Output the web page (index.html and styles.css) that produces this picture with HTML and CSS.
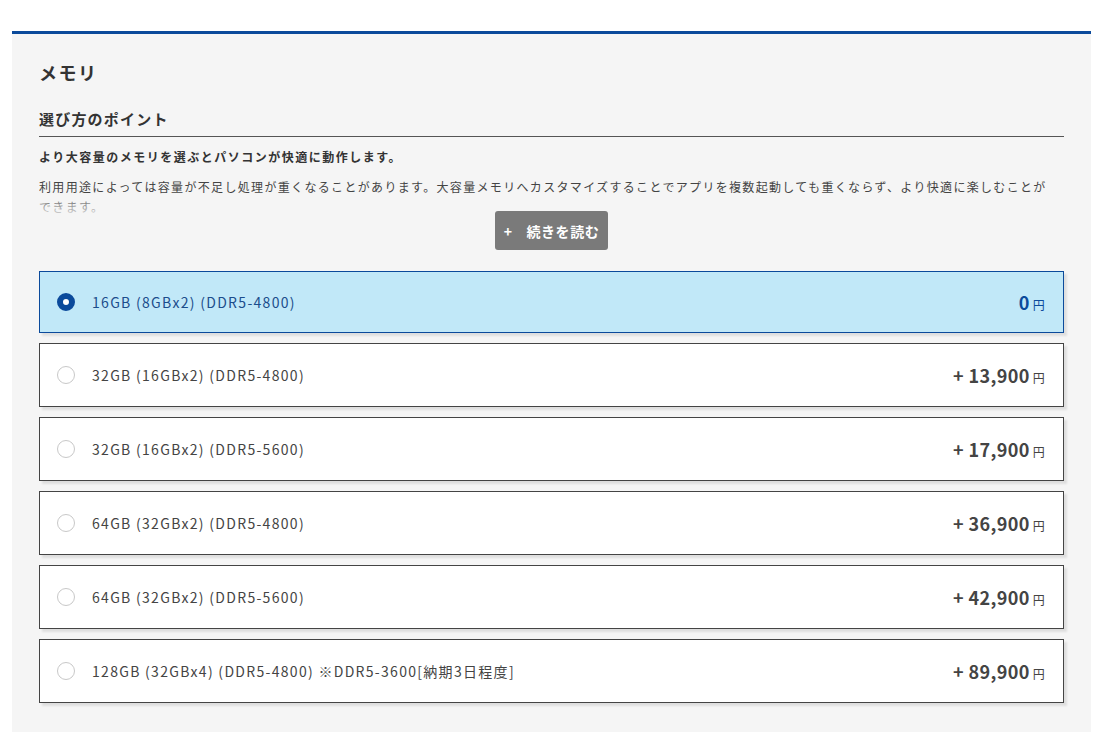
FILE: index.html
```html
<!DOCTYPE html>
<html lang="ja">
<head>
<meta charset="utf-8">
<title>メモリ</title>
<link rel="stylesheet" href="styles.css">
</head>
<body>
<section class="panel">
  <h2 class="title">メモリ</h2>
  <h3 class="subtitle">選び方のポイント</h3>
  <p class="lead">より大容量のメモリを選ぶとパソコンが快適に動作します。</p>
  <div class="more-wrap">
    <p class="desc">利用用途によっては容量が不足し処理が重くなることがあります。大容量メモリへカスタマイズすることでアプリを複数起動しても重くならず、より快適に楽しむことができます。</p>
  </div>
  <button class="more-btn" type="button"><span class="plus">+</span>続きを読む</button>

  <ul class="options">
    <li class="option selected">
      <span class="radio"></span>
      <span class="label">16GB (8GBx2) (DDR5-4800)</span>
      <span class="price">0<small>円</small></span>
    </li>
    <li class="option">
      <span class="radio"></span>
      <span class="label">32GB (16GBx2) (DDR5-4800)</span>
      <span class="price">+ 13,900<small>円</small></span>
    </li>
    <li class="option">
      <span class="radio"></span>
      <span class="label">32GB (16GBx2) (DDR5-5600)</span>
      <span class="price">+ 17,900<small>円</small></span>
    </li>
    <li class="option">
      <span class="radio"></span>
      <span class="label">64GB (32GBx2) (DDR5-4800)</span>
      <span class="price">+ 36,900<small>円</small></span>
    </li>
    <li class="option">
      <span class="radio"></span>
      <span class="label">64GB (32GBx2) (DDR5-5600)</span>
      <span class="price">+ 42,900<small>円</small></span>
    </li>
    <li class="option">
      <span class="radio"></span>
      <span class="label">128GB (32GBx4) (DDR5-4800) ※DDR5-3600[納期3日程度]</span>
      <span class="price">+ 89,900<small>円</small></span>
    </li>
  </ul>
</section>
</body>
</html>
```
FILE: styles.css
```css
html, body {
  margin: 0;
  padding: 0;
  background: #ffffff;
}
body {
  font-family: "Noto Sans CJK JP", "Noto Sans", sans-serif;
  color: #333333;
  padding: 31px 7px 0 12px;
}
.panel {
  border-top: 3px solid #0b4a9b;
  background: #f5f5f5;
  padding: 0 27px 40px;
  min-height: 600px;
}
.title {
  margin: 0;
  padding-top: 25px;
  font-size: 18px;
  line-height: 26px;
  font-weight: 700;
  color: #333;
  letter-spacing: 0.08em;
}
.subtitle {
  margin: 23px 0 0;
  font-size: 15px;
  line-height: 22px;
  font-weight: 700;
  color: #333;
  letter-spacing: 0.08em;
  padding-bottom: 6px;
  border-bottom: 1px solid #555;
}
.lead {
  margin: 10px 0 0;
  font-size: 12px;
  line-height: 20px;
  font-weight: 700;
  letter-spacing: 1.5px;
  color: #333;
}
.more-wrap {
  position: relative;
  margin-top: 10px;
  height: 40px;
  overflow: hidden;
}
.more-wrap::after {
  content: "";
  position: absolute;
  left: 0;
  right: 0;
  top: 20px;
  height: 20px;
  background: linear-gradient(to bottom, rgba(245,245,245,0.15), rgba(245,245,245,0.9));
}
.desc {
  margin: 0;
  padding-right: 10px;
  font-size: 12px;
  line-height: 20px;
  letter-spacing: 1.33px;
  color: #444;
}
.more-btn {
  position: relative;
  display: block;
  margin: -6px auto 0;
  width: 113px;
  height: 39px;
  border: none;
  border-radius: 3px;
  background: #7a7a7a;
  color: #fff;
  font-family: "Noto Sans CJK JP", "Noto Sans", sans-serif;
  font-size: 14px;
  font-weight: 700;
  padding: 0;
  letter-spacing: 0.04em;
}
.more-btn .plus {
  margin-right: 14px;
  font-weight: 700;
}
.options {
  list-style: none;
  margin: 21px 0 0;
  padding: 0;
  display: flex;
  flex-direction: column;
  gap: 10px;
}
.option {
  display: flex;
  align-items: center;
  height: 64px;
  box-sizing: border-box;
  background: #fff;
  border: 1px solid #444;
  box-shadow: 3px 3px 2px rgba(0, 0, 0, 0.09);
  padding: 0 18px 0 17px;
}
.option.selected {
  height: 62px;
  background: #c1e8f8;
  border-color: #0b4a9b;
}
.radio {
  width: 18px;
  height: 18px;
  box-sizing: border-box;
  border-radius: 50%;
  border: 1px solid #c8c8c8;
  background: #fff;
  flex: none;
}
.selected .radio {
  border: 6px solid #0b4a9b;
  background: #fff;
}
.label {
  margin-left: 17px;
  font-size: 14px;
  letter-spacing: 1.3px;
  color: #444;
  flex: 1;
}
.selected .label {
  color: #1b4d8c;
}
.price {
  font-size: 18px;
  font-weight: 700;
  color: #444;
  letter-spacing: 0.02em;
}
.price small {
  font-size: 12px;
  font-weight: 400;
  margin-left: 3px;
}
.selected .price {
  color: #0b4a9b;
}
```
